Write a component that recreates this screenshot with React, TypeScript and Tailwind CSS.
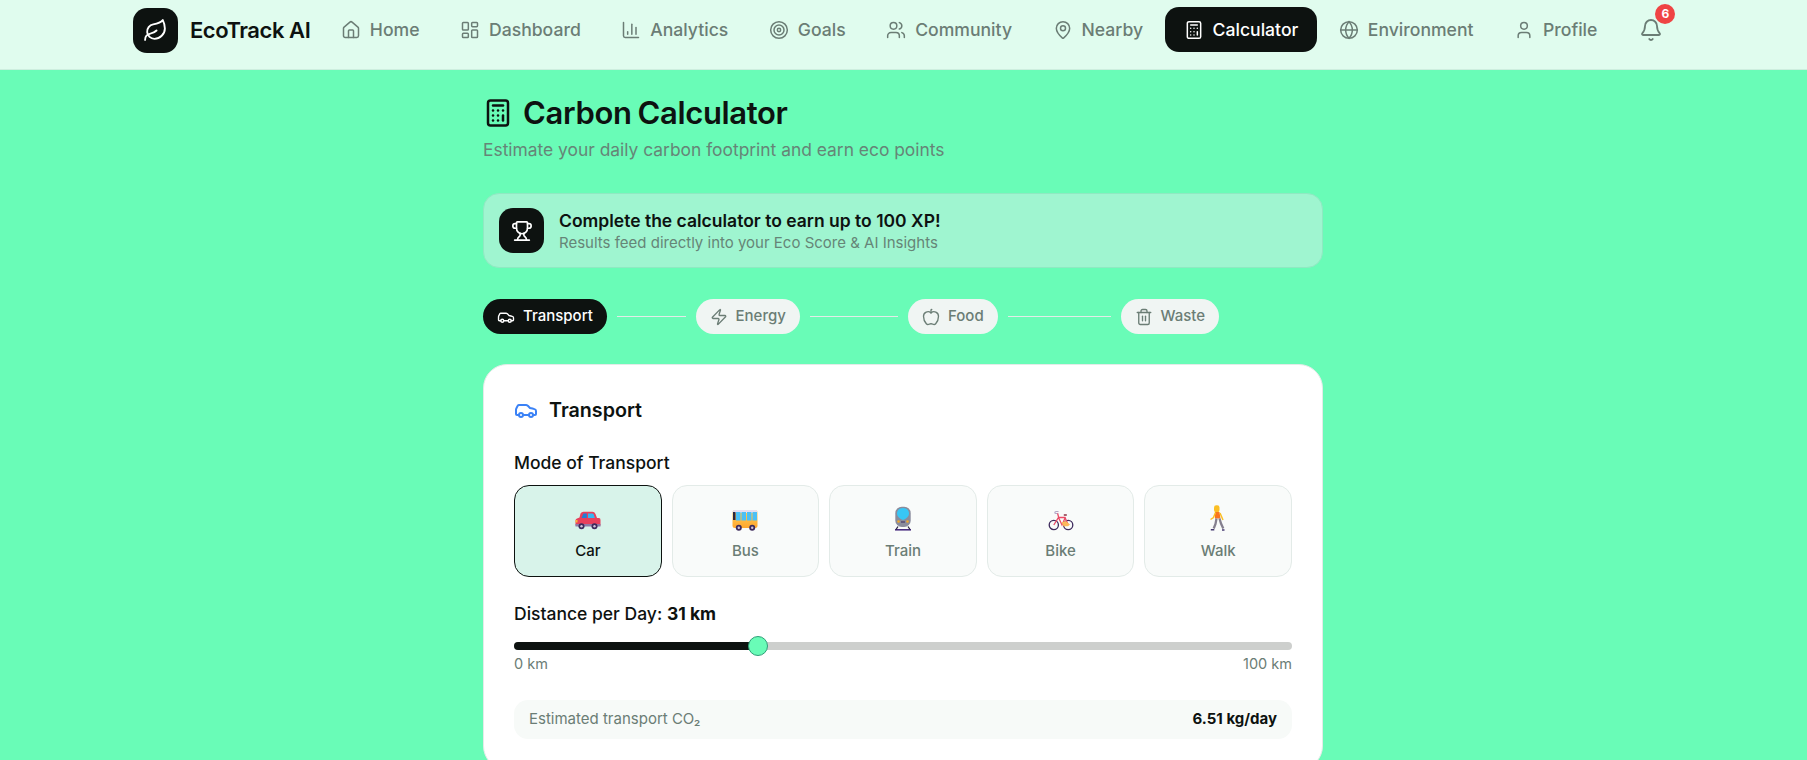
import React from 'react';
import {
  Apple, Bell, Calculator, Car, ChartColumn, Globe, House, LayoutDashboard,
  Leaf, MapPin, Target, Trash2, Trophy, User, Users, Zap,
} from 'lucide-react';

const navItems = [
  { label: 'Home', icon: House },
  { label: 'Dashboard', icon: LayoutDashboard },
  { label: 'Analytics', icon: ChartColumn },
  { label: 'Goals', icon: Target },
  { label: 'Community', icon: Users },
  { label: 'Nearby', icon: MapPin },
  { label: 'Calculator', icon: Calculator, active: true },
  { label: 'Environment', icon: Globe },
  { label: 'Profile', icon: User },
];

const steps = [
  { label: 'Transport', icon: Car, active: true },
  { label: 'Energy', icon: Zap },
  { label: 'Food', icon: Apple },
  { label: 'Waste', icon: Trash2 },
];

// The emoji in the reference are colour glyphs, drawn here by hand
const Wheel = ({ x, y }: { x: number; y: number }) => (
  <>
    <circle cx={x} cy={y} r="3" fill="#3d2a5c" />
    <circle cx={x} cy={y} r="1.2" fill="#cfc6da" />
  </>
);

const CarEmoji = () => (
  <svg width="26" height="26" viewBox="0 0 26 26">
    <path d="M5.500 8.500Q6.500 6.700 8.500 6.700H17.500Q19.500 6.700 20.500 9L22 13H24Q25.500 13 25.500 15V20.500H0.500V15.500Q0.500 14 2 13.500L4.500 12.500Z" fill="#e8405c" />
    <path d="M8.500 8.500h3.300V13H6.500z" fill="#1f7fd6" />
    <path d="M13 8.500h4.300q1 0 1.400 1l1.200 3.500H13z" fill="#35b6f2" />
    <path d="M0.500 19h25v2.500H0.500z" fill="#8f7aa6" />
    <rect x="0.500" y="15" width="2" height="2.500" fill="#fbb03b" />
    <Wheel x={6.500} y={21.300} />
    <Wheel x={19.500} y={21.300} />
  </svg>
);

const BusEmoji = () => (
  <svg width="26" height="26" viewBox="0 0 26 26">
    <defs>
      <linearGradient id="busBody" x1="0" y1="0" x2="0" y2="1">
        <stop offset="0" stopColor="#ffd35c" />
        <stop offset="1" stopColor="#ffa62e" />
      </linearGradient>
    </defs>
    <rect x="0.500" y="5" width="25" height="18" rx="2.500" fill="url(#busBody)" />
    <path d="M3 5h20.500a2 2 0 0 1 2 2v1h-25V7a2 2 0 0 1 2-2z" fill="#e6def0" />
    <rect x="1" y="7" width="2.500" height="8" fill="#2b2440" />
    <path d="M4 7h4.500v8.500H4zM9.500 7H14v8.500H9.500zM15 7h4.500v8.500H15zM20.500 7h4.500v8.500h-4.500z" fill="#4cc0f6" />
    <Wheel x={6.800} y={22.800} />
    <Wheel x={20.200} y={22.800} />
  </svg>
);

const TrainEmoji = () => (
  <svg width="26" height="26" viewBox="0 0 26 26">
    <path d="M5 24.800h16" stroke="#4a2f82" strokeWidth="1.600" />
    <path d="M8 21.500l-2 3M18 21.500l2 3" stroke="#2b2440" strokeWidth="1.300" />
    <rect x="5.300" y="1.700" width="15.400" height="20.300" rx="6.500" fill="#8a8c9c" />
    <path d="M7 8.500C7 5 9.500 3 13 3s6 2 6 5.500c0 3-3 5.500-6 6.500-3-1-6-3.500-6-6.500z" fill="#38c6f5" />
    <circle cx="8.500" cy="16.500" r="1.300" fill="#f0a92e" />
    <circle cx="17.500" cy="16.500" r="1.300" fill="#f0a92e" />
    <rect x="11" y="16.500" width="4" height="1" fill="#3d2a5c" />
  </svg>
);

const BikeEmoji = () => (
  <svg width="26" height="26" viewBox="0 0 26 26">
    <circle cx="5.800" cy="20" r="4.600" fill="none" stroke="#3d2a5c" strokeWidth="1.300" />
    <circle cx="20.200" cy="20" r="4.600" fill="none" stroke="#3d2a5c" strokeWidth="1.300" />
    <path d="M5.800 20l4.700-7.500h6.500l3.200 7.500M10.500 12.500l3.500 7.500 3.500-8M9.500 8l1.200 4.500" stroke="#ea4a66" strokeWidth="1.300" fill="none" />
    <path d="M10.500 6.500H8q-1.200 0-1.200 1 0 1 1.200 1h1.500" stroke="#b3a6c8" strokeWidth="1.100" fill="none" />
    <path d="M15.800 10h3" stroke="#8c3040" strokeWidth="1.500" />
    <path d="M13.500 17.500l4-1.500 4.500 3.500-2 1.800h-4.500z" fill="#fbb85c" />
  </svg>
);

const WalkEmoji = () => (
  <svg width="26" height="26" viewBox="0 0 26 26">
    <rect x="9" y="0.300" width="5.500" height="7" rx="2.300" fill="#fbbf24" />
    <path d="M10 7h4.500l1 6.500h-5.500z" fill="#f9731f" />
    <path d="M10.500 7.500L8.500 12.500l-3 2M15 8l3 7" stroke="#fbbf24" strokeWidth="1.500" fill="none" />
    <path d="M11.500 13.500l-1 5.500-1.800 4.500M14.500 13.500l1.500 5 2.300 5" stroke="#85808f" strokeWidth="2.300" fill="none" />
    <path d="M5.800 24.800h3.500M17 25h2.500" stroke="#453a70" strokeWidth="1.500" />
  </svg>
);

const modes = [
  { label: 'Car', emoji: CarEmoji, active: true },
  { label: 'Bus', emoji: BusEmoji },
  { label: 'Train', emoji: TrainEmoji },
  { label: 'Bike', emoji: BikeEmoji },
  { label: 'Walk', emoji: WalkEmoji },
];

export default function App() {
  return (
    <div className="h-screen overflow-hidden bg-[#69fcb7] font-['Inter',sans-serif] text-[#0d1210]">
      {/* Navbar */}
      <nav className="h-[70px] border-b border-[#cdeede] bg-[#e0fcee] pl-[133px] pt-[7px]">
        <div className="flex items-start">
          <div className="flex items-center gap-3">
            <div className="flex h-[45px] w-[45px] items-center justify-center rounded-[14px] bg-[#0d1210]">
              <Leaf size={25} className="text-white" strokeWidth={1.8} />
            </div>
            <span className="pt-px text-[22px] font-semibold tracking-[-0.45px] leading-[45px]">EcoTrack AI</span>
          </div>
          <div className="ml-[12px] flex items-center gap-[3.5px]">
            {navItems.map((item) => (
              <a
                key={item.label}
                className={`flex h-[45px] items-center gap-[9px] rounded-[14px] px-[18.5px] text-[17.6px] font-medium ${
                  item.active ? 'bg-[#0d1210] text-white' : 'text-[#6b7d75]'
                }`}
              >
                <item.icon size={20} strokeWidth={1.8} />
                <span className="pt-[2px]">{item.label}</span>
              </a>
            ))}
            <div className="relative ml-[20px] mt-[1px] text-[#6b7d75]">
              <Bell size={24} strokeWidth={1.8} />
              <span className="absolute -top-[14px] left-[16px] flex h-5 w-5 items-center justify-center rounded-full bg-[#ef4444] text-[12px] font-bold text-white">6</span>
            </div>
          </div>
        </div>
      </nav>

      <main className="ml-[483px] w-[840px] pt-[25px]">
        {/* Header */}
        <div className="flex h-[36px] items-center gap-[10px]">
          <Calculator size={30} strokeWidth={2} />
          <h1 className="text-[31px] font-semibold leading-[36px] tracking-[-0.35px] [word-spacing:-1.5px]">Carbon Calculator</h1>
        </div>
        <p className="mt-[7px] text-[17.4px] leading-6 text-[#668577]">Estimate your daily carbon footprint and earn eco points</p>

        {/* XP banner */}
        <div className="mt-[31px] flex h-[75px] items-center gap-[15px] rounded-[16px] border border-[#8fe9c2] bg-[#9ff5d0] px-[15px]">
          <div className="flex h-[45px] w-[45px] items-center justify-center rounded-[14px] bg-[#0d1210]">
            <Trophy size={22} className="text-white" strokeWidth={1.8} />
          </div>
          <div>
            <p className="text-[17.5px] font-semibold leading-[24px]">Complete the calculator to earn up to 100 XP!</p>
            <p className="text-[15px] leading-[20px] text-[#668577]">Results feed directly into your Eco Score &amp; AI Insights</p>
          </div>
        </div>

        {/* Steps */}
        <div className="mt-[31px] flex">
          {steps.map((step, i) => (
            <div key={step.label} className={`flex items-center ${i < 3 ? 'w-[212.5px]' : ''}`}>
              <div
                className={`flex h-[35px] items-center gap-2 rounded-full px-[14px] text-[15px] font-medium ${
                  step.active ? 'bg-[#0d1210] text-white' : 'bg-[#f0f5f3] text-[#6b7d75]'
                }`}
              >
                <step.icon size={18} strokeWidth={1.8} />
                {step.label}
              </div>
              {i < 3 && <div className="mx-[10px] h-px flex-1 bg-[#e3ebe8]" />}
            </div>
          ))}
        </div>

        {/* Transport card */}
        <section className="mt-[30px] rounded-[24px] border border-[#e3ebe8] bg-white p-[30px]">
          <div className="flex items-center gap-[11px]">
            <Car size={24} strokeWidth={2} className="text-[#3b82f6]" />
            <h2 className="text-[19.7px] font-semibold leading-[30px]">Transport</h2>
          </div>

          <p className="mt-[26px] text-[17.5px] font-medium leading-6">Mode of Transport</p>
          <div className="mt-[10px] grid grid-cols-5 gap-[10px]">
            {modes.map((mode) => (
              <button
                key={mode.label}
                className={`flex h-[92px] flex-col items-center justify-center gap-[10px] rounded-[15px] border pt-1 text-[15px] font-medium leading-5 ${
                  mode.active ? 'border-[#0d1210] bg-[#d8f3ea] text-[#0d1210]' : 'border-[#e3ebe8] bg-[#f9fbfa] text-[#6b7d75]'
                }`}
              >
                <mode.emoji />
                {mode.label}
              </button>
            ))}
          </div>

          <p className="mt-[25px] text-[17.5px] font-medium leading-6">
            Distance per Day: <span className="font-bold">31 km</span>
          </p>
          <div className="relative mt-[16px] h-2 rounded-full bg-[#cdcfcd]">
            <div className="h-2 w-[244px] rounded-full bg-[#0d1210]" />
            <div className="absolute -top-[6px] left-[234px] h-5 w-5 rounded-full border border-[#2f9f78] bg-[#69fcb7]" />
          </div>
          <div className="mt-[4px] flex justify-between text-[14.5px] leading-5 text-[#6b7d75]">
            <span>0 km</span>
            <span>100 km</span>
          </div>

          <div className="mt-[26px] flex h-[39px] items-center justify-between rounded-[14px] bg-[#f7faf8] px-[15px] text-[15px]">
            <span className="text-[#6b7d75]">Estimated transport CO₂</span>
            <span className="font-bold">6.51 kg/day</span>
          </div>
        </section>
      </main>
    </div>
  );
}
